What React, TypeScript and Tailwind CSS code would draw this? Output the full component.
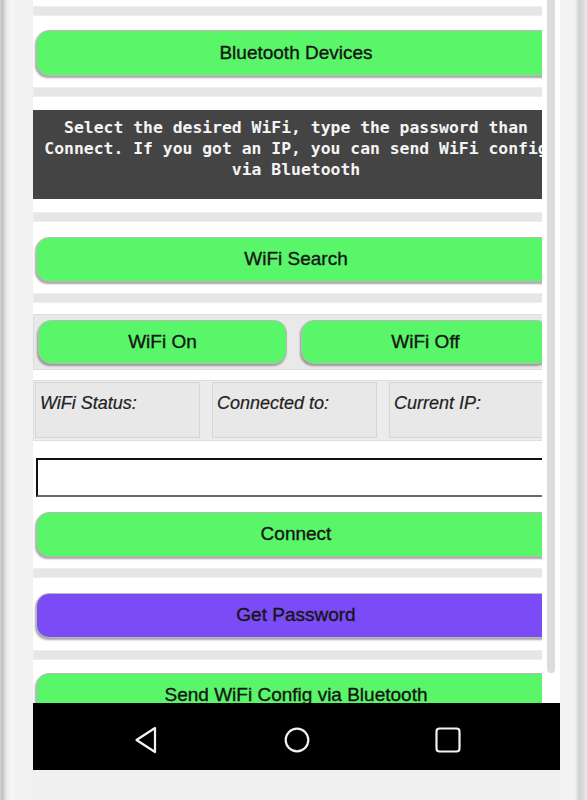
import React from "react";

const sans = { fontFamily: '"Liberation Sans", Arial, sans-serif' } as const;
const mono = { fontFamily: '"DejaVu Sans Mono", "Liberation Mono", monospace' } as const;

function Strip({ className = "" }: { className?: string }) {
  return <div className={`h-[10px] w-[526px] bg-[#e6e6e6] border border-[#eeeeee] ${className}`} />;
}

function Btn({ label, className = "", purple = false }: { label: string; className?: string; purple?: boolean }) {
  return (
    <div
      className={`ml-[3px] w-[520px] h-[46px] rounded-[13px] border border-[#b9b9b9] shadow-[-1px_2px_2px_rgba(0,0,0,0.35)] flex items-center justify-center text-[19px] text-[#151515] [-webkit-text-stroke:0.35px_#151515] ${
        purple ? "bg-[#7b4bf6]" : "bg-[#5af66a]"
      } ${className}`}
      style={sans}
    >
      {label}
    </div>
  );
}

function Cell({ label }: { label: string }) {
  return (
    <div className="w-[165px] h-[56px] shrink-0 bg-[#e8e8e8] border border-[#d6d6d6] pl-[4px] pt-[10px] text-[18px] italic text-[#222222] [-webkit-text-stroke:0.2px_#222222] leading-[21px]" style={sans}>
      {label}
    </div>
  );
}

export default function App() {
  return (
    <div className="w-[587px] h-[800px] flex overflow-hidden bg-[#f1f1f1]">
      {/* left frame */}
      <div className="w-[33px] h-full shrink-0 bg-[linear-gradient(to_right,#d8d8d8_0px,#bdbdbd_2px,#e6e6e6_6px,#f7f7f7_11px,#f1f1f1_17px)]" />
      {/* middle */}
      <div className="w-[527px] h-full shrink-0 flex flex-col">
        <div className="relative w-[527px] h-[770px] bg-white overflow-hidden flex">
          {/* content */}
          <div className="w-[509px] h-full overflow-hidden shrink-0">
            <div className="w-[526px] pt-[6px] flex flex-col">
              <Strip />
              <Btn label="Bluetooth Devices" className="mt-[14px]" />
              <Strip className="mt-[11px]" />
              <div
                className="mt-[13px] w-[526px] h-[89px] bg-[#444444] pt-[7px] text-center text-[16.4px] leading-[21px] font-bold text-[#f4f4f4] whitespace-pre"
                style={mono}
              >
                {"Select the desired WiFi, type the password than\nConnect. If you got an IP, you can send WiFi config\nvia Bluetooth"}
              </div>
              <Strip className="mt-[13px]" />
              <Btn label="WiFi Search" className="mt-[15px] !h-[45px]" />
              <Strip className="mt-[11px]" />
              <div className="mt-[11px] w-[526px] h-[56px] bg-[#e9e9e9] border border-[#dddddd] flex gap-[14px] pl-[4px] pt-[5px]">
                <div className="w-[249px] h-[44px] shrink-0 rounded-[13px] bg-[#5af66a] border border-[#b9b9b9] shadow-[-1px_2px_2px_rgba(0,0,0,0.35)] flex items-center justify-center text-[19px] text-[#151515] [-webkit-text-stroke:0.35px_#151515]" style={sans}>
                  WiFi On
                </div>
                <div className="w-[249px] h-[44px] shrink-0 rounded-[13px] bg-[#5af66a] border border-[#b9b9b9] shadow-[-1px_2px_2px_rgba(0,0,0,0.35)] flex items-center justify-center text-[19px] text-[#151515] [-webkit-text-stroke:0.35px_#151515]" style={sans}>
                  WiFi Off
                </div>
              </div>
              <div className="mt-[10px] w-[526px] h-[61px] bg-[#ececec] border border-[#dedede] flex gap-[12px] pl-[1px] pt-[1px]">
                <Cell label="WiFi Status:" />
                <Cell label="Connected to:" />
                <Cell label="Current IP:" />
              </div>
              <div className="mt-[17px] ml-[3px] w-[520px] h-[39px] bg-white border-2 border-t-[#111111] border-l-[#111111] border-b-[#6a6a6a] border-r-[#6a6a6a]" />
              <Btn label="Connect" className="mt-[15px] !h-[45px]" />
              <Strip className="mt-[11px]" />
              <Btn label="Get Password" purple className="mt-[15px] !h-[45px]" />
              <Strip className="mt-[12px]" />
              <Btn label="Send WiFi Config via Bluetooth" className="mt-[13px] !h-[45px]" />
            </div>
          </div>
          <div className="w-[5px] shrink-0" />
          {/* scrollbar */}
          <div className="w-[8px] shrink-0 h-full">
            <div className="w-[8px] h-[673px] bg-[#dcdcdc] rounded-b-[4px]" />
          </div>
          <div className="w-[5px] shrink-0" />
          {/* nav bar overlay */}
          <div className="absolute left-0 bottom-0 w-[527px] h-[67px] bg-black flex justify-center items-center pt-[7px]">
            <div className="w-[151px] flex justify-center">
              <svg width="24" height="28" viewBox="0 0 24 28">
                <polygon points="21,2 2.5,14 21,26" fill="none" stroke="#f2f2f2" strokeWidth="2.2" strokeLinejoin="round" />
              </svg>
            </div>
            <div className="w-[151px] flex justify-center">
              <svg width="26" height="26" viewBox="0 0 26 26">
                <circle cx="13" cy="13" r="11.3" fill="none" stroke="#f2f2f2" strokeWidth="2.2" />
              </svg>
            </div>
            <div className="w-[151px] flex justify-center">
              <svg width="26" height="26" viewBox="0 0 26 26">
                <rect x="1.5" y="1.5" width="23" height="23" rx="3" fill="none" stroke="#f2f2f2" strokeWidth="2.2" />
              </svg>
            </div>
          </div>
        </div>
        <div className="h-[30px] bg-[#f0f0f0]" />
      </div>
      {/* right frame */}
      <div className="w-[27px] h-full shrink-0 bg-[linear-gradient(to_right,#f4f4f4_0px,#f1f1f1_15px,#d3d3d3_19px,#dadada_23px,#ececec_27px)]" />
    </div>
  );
}
